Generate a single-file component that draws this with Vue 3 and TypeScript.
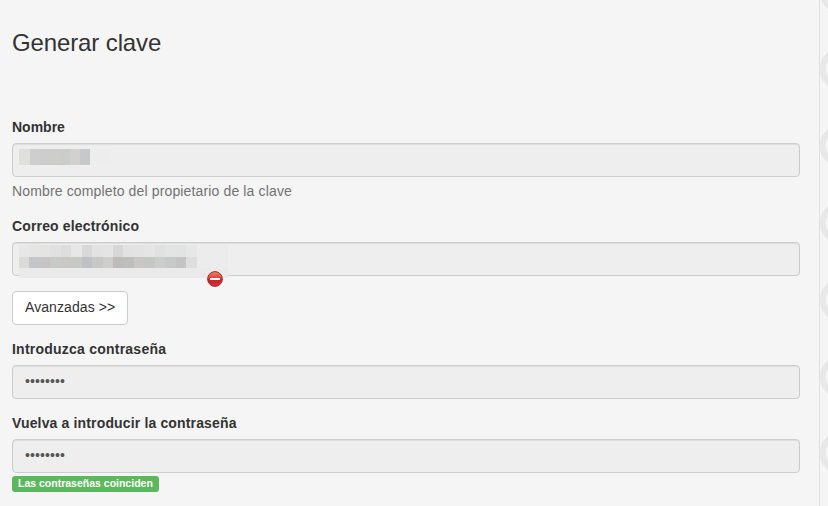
<script setup lang="ts">
import { ref } from 'vue'

const password = ref('abcdefgh')
const confirmation = ref('abcdefgh')

// Tones of the pixelated name and address
const nameCells: string[] = ['#dfdfde', '#cecece', '#cdcdcd', '#cdcdcb', '#cbcdcb', '#d2d1cf', '#c7c8ca', '#eceeed', '#ededed']

const mailTop: string[] = [
  '#e7e7e7', '#e5e5e5', '#e4e4e3', '#e1e1e1', '#dddddd', '#e7e7e7', '#d8d8d9', '#e2e2e2', '#e4e4e4', '#d7d7d7',
  '#e1e2e2', '#e3e3e3', '#e6e5e5', '#e0e2e2', '#e3e4e4', '#e2e3e3', '#e7e7e7', '#ececec', '#ececec', '#ececec',
]
const mailMiddle: string[] = [
  '#dbdbd9', '#c4c5c8', '#c7c5c3', '#c8cac7', '#c9c8c5', '#c7c9c6', '#bfc0c3', '#c8c8c6', '#cccdcc', '#bdbcba',
  '#bebebe', '#c9c7c5', '#c5c7c5', '#cccccd', '#c8c9c9', '#c4c4c5', '#dedede', '#ececec', '#ececec', '#ececec',
]
const mailBottom: string[] = Array.from({ length: 20 }, () => '#eaeaea')
const mailCells: string[] = [...mailTop, ...mailMiddle, ...mailBottom]

const rings: number[] = [-8, 69, 146, 223, 300, 377, 453]
</script>

<template>
  <div class="page">
    <main class="panel">
      <h3 class="title">Generar clave</h3>
      <div class="group">
        <label class="caption caption-tight">Nombre</label>
        <div class="control">
          <div class="mosaic mosaic-name">
            <span v-for="(color, i) in nameCells" :key="i" :style="{ background: color }"></span>
          </div>
        </div>
        <span class="help">Nombre completo del propietario de la clave</span>
      </div>
      <div class="group">
        <label class="caption">Correo electrónico</label>
        <div class="control">
          <div class="mosaic mosaic-mail">
            <span v-for="(color, i) in mailCells" :key="i" :style="{ background: color }"></span>
          </div>
          <svg class="deny" width="16" height="16" viewBox="0 0 16 16">
            <defs>
              <linearGradient id="deny-fill" x1="0" y1="0" x2="0" y2="1">
                <stop offset="0" stop-color="#ef806c" />
                <stop offset=".45" stop-color="#df4034" />
                <stop offset=".55" stop-color="#c9202b" />
                <stop offset="1" stop-color="#d0333e" />
              </linearGradient>
            </defs>
            <circle cx="8" cy="8" r="7.4" fill="url(#deny-fill)" stroke="#a92c30" stroke-width="1" />
            <rect x="3" y="7" width="10" height="2" fill="#fff" />
          </svg>
        </div>
      </div>
      <div class="group">
        <button class="button" type="button">Avanzadas &gt;&gt;</button>
      </div>
      <div class="group">
        <label class="caption caption-wide" for="password">Introduzca contraseña</label>
        <input id="password" v-model="password" class="control" type="password" disabled />
      </div>
      <div class="group">
        <label class="caption" for="confirmation">Vuelva a introducir la contraseña</label>
        <input id="confirmation" v-model="confirmation" class="control" type="password" disabled />
        <span class="badge">Las contraseñas coinciden</span>
      </div>
    </main>
    <aside class="edge">
      <svg width="8" height="506" viewBox="820 0 8 506">
        <circle v-for="y in rings" :key="y" cx="841" :cy="y" r="18.3" fill="none" stroke="#e8e8e8" stroke-width="6" />
      </svg>
    </aside>
  </div>
</template>

<style>
body {
  margin: 0;
  background: #f5f5f5;
}
</style>

<style scoped>
.page,
.page * {
  box-sizing: border-box;
}

.page {
  display: flex;
  height: 506px;
  overflow: hidden;
  background: #f5f5f5;
  color: #333;
  font: 14px/20px "Liberation Sans", Arial, sans-serif;
}

.panel {
  width: 819px;
  padding: 30px 19px 0 12px;
}

.edge {
  width: 9px;
  border-left: 1px solid #e0e0e0;
}

.edge svg {
  display: block;
}

.title {
  margin: 0 0 62px;
  font-size: 24px;
  font-weight: 400;
  line-height: 26px;
  letter-spacing: -0.12px;
}

.group {
  margin-bottom: 15px;
}

.caption {
  display: block;
  margin-bottom: 5px;
  padding-bottom: 2px;
  font-weight: 700;
  line-height: 18px;
  letter-spacing: 0.15px;
}

.caption-tight {
  letter-spacing: 0;
}

.caption-wide {
  letter-spacing: 0.23px;
}

.control {
  position: relative;
  display: block;
  width: 100%;
  height: 34px;
  margin: 0;
  padding: 5px 12px 7px;
  border: 1px solid #ccc;
  border-radius: 4px;
  background: #eee;
  box-shadow: inset 0 1px 1px rgba(0, 0, 0, 0.075);
  color: #555;
  font: inherit;
  letter-spacing: 0.1px;
}

.help {
  display: block;
  margin-top: 5px;
  padding-bottom: 2px;
  color: #737373;
  line-height: 18px;
  letter-spacing: 0.14px;
}

.mosaic {
  position: absolute;
  left: 6px;
  display: grid;
}

.mosaic-name {
  top: 5px;
  grid-template-columns: 11px repeat(8, 10px);
  grid-template-rows: 16px;
}

.mosaic-mail {
  top: 2px;
  width: 209px;
  grid-template-columns: repeat(20, 1fr);
  grid-template-rows: 12px 11px 10px;
}

.deny {
  position: absolute;
  top: 28px;
  left: 194px;
}

.button {
  display: block;
  height: 34px;
  padding: 5px 12px 7px;
  border: 1px solid #ccc;
  border-radius: 4px;
  background: #fff;
  color: #333;
  font: inherit;
  letter-spacing: 0.08px;
}

.badge {
  display: block;
  width: max-content;
  height: 16px;
  margin-top: 3px;
  padding: 2px 6px 3px;
  border-radius: 3px;
  background: #5cb85c;
  color: #fff;
  font-size: 10.5px;
  font-weight: 700;
  line-height: 11px;
}
</style>
